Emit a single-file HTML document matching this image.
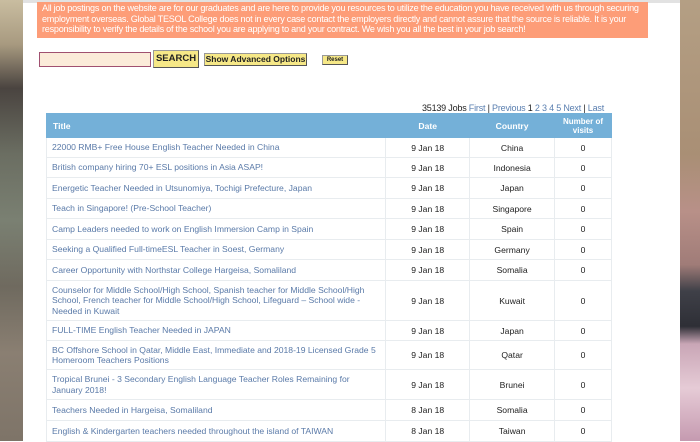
<!DOCTYPE html>
<html><head><meta charset="utf-8"><style>
*{margin:0;padding:0;box-sizing:border-box}
body{width:700px;height:441px;overflow:hidden;position:relative;font-family:"Liberation Sans",Arial,sans-serif;background:#fff}
#lb{position:absolute;left:0;top:0;width:23px;height:441px;background:linear-gradient(180deg,#c9bda0 0%,#a89a80 10%,#4a4440 20%,#6b6e62 35%,#7a8072 50%,#6f6a5f 65%,#8a7f72 80%,#7e7468 100%)}
#rb{position:absolute;left:680px;top:0;width:20px;height:441px;background:linear-gradient(180deg,#b49f84 0%,#a98f75 35%,#b89088 48%,#a07c78 60%,#3f4048 66%,#2e2f36 74%,#c9a6b6 78%,#e6cbd6 88%,#c59ab0 100%)}
#top{position:absolute;left:23px;top:0;width:657px;height:3px;background:#e2e2e2}
#banner{position:absolute;left:37px;top:2px;width:611px;height:36px;background:#fd9d78;color:#fff;font-size:9.1px;line-height:10.5px;padding:1px 5px;letter-spacing:-0.25px}
#inp{position:absolute;left:39px;top:52px;width:112px;height:15px;background:#fbebd9;border:1px solid #a05070}
.btn{position:absolute;background:#f6e887;border:1px solid #999;border-right-color:#555;border-bottom-color:#555;font-weight:bold;color:#222;text-align:center}
#pg{position:absolute;left:300px;top:103px;width:304px;text-align:right;font-size:9px;color:#222;letter-spacing:-0.2px}
#pg a{color:#5a7fb0;text-decoration:none}
table{position:absolute;left:46px;top:113px;width:566px;border-collapse:collapse;font-size:8.6px}
th{background:#74b0d8;color:#fff;font-weight:bold;height:24px;border:1px solid #74b0d8}
td{border:1px solid #e8ecef;color:#222;text-align:center;padding:0 4px}
td.t{text-align:left;color:#5a7aa8;padding:1px 5px;line-height:10.5px}
</style></head><body>
<div id="lb"></div><div id="rb"></div><div id="top"></div>
<div id="banner">All job postings on the website are for our graduates and are here to provide you resources to utilize the education you have received with us through securing employment overseas. Global TESOL College does not in every case contact the employers directly and cannot assure that the source is reliable. It is your responsibility to verify the details of the school you are applying to and your contract. We wish you all the best in your job search!</div>
<div id="inp"></div>
<div class="btn" style="left:153px;top:50px;width:46px;height:18px;font-size:9.5px;line-height:16px">SEARCH</div>
<div class="btn" style="left:204px;top:53px;width:103px;height:13px;font-size:8.5px;line-height:11px">Show Advanced Options</div>
<div class="btn" style="left:322px;top:55px;width:26px;height:10px;font-size:6px;line-height:8px">Reset</div>
<div id="pg">35139 Jobs <a>First</a> | <a>Previous</a> 1 <a>2 3 4 5 Next</a> | <a>Last</a></div>
<table>
<tr><th style="width:340px;text-align:left;padding-left:6px">Title</th><th style="width:84px">Date</th><th style="width:85px">Country</th><th style="width:57px;font-size:8px;line-height:9px">Number of visits</th></tr>
<tr style="height:20px"><td class="t">22000 RMB+ Free House English Teacher Needed in China</td><td>9 Jan 18</td><td>China</td><td>0</td></tr>
<tr style="height:20px"><td class="t">British company hiring 70+ ESL positions in Asia ASAP!</td><td>9 Jan 18</td><td>Indonesia</td><td>0</td></tr>
<tr style="height:21px"><td class="t">Energetic Teacher Needed in Utsunomiya, Tochigi Prefecture, Japan</td><td>9 Jan 18</td><td>Japan</td><td>0</td></tr>
<tr style="height:20px"><td class="t">Teach in Singapore! (Pre-School Teacher)</td><td>9 Jan 18</td><td>Singapore</td><td>0</td></tr>
<tr style="height:21px"><td class="t">Camp Leaders needed to work on English Immersion Camp in Spain</td><td>9 Jan 18</td><td>Spain</td><td>0</td></tr>
<tr style="height:20px"><td class="t">Seeking a Qualified Full-timeESL Teacher in Soest, Germany</td><td>9 Jan 18</td><td>Germany</td><td>0</td></tr>
<tr style="height:21px"><td class="t">Career Opportunity with Northstar College Hargeisa, Somaliland</td><td>9 Jan 18</td><td>Somalia</td><td>0</td></tr>
<tr style="height:40px"><td class="t">Counselor for Middle School/High School, Spanish teacher for Middle School/High School, French teacher for Middle School/High School, Lifeguard – School wide - Needed in Kuwait</td><td>9 Jan 18</td><td>Kuwait</td><td>0</td></tr>
<tr style="height:20px"><td class="t">FULL-TIME English Teacher Needed in JAPAN</td><td>9 Jan 18</td><td>Japan</td><td>0</td></tr>
<tr style="height:29px"><td class="t">BC Offshore School in Qatar, Middle East, Immediate and 2018-19 Licensed Grade 5 Homeroom Teachers Positions</td><td>9 Jan 18</td><td>Qatar</td><td>0</td></tr>
<tr style="height:30px"><td class="t">Tropical Brunei - 3 Secondary English Language Teacher Roles Remaining for January 2018!</td><td>9 Jan 18</td><td>Brunei</td><td>0</td></tr>
<tr style="height:21px"><td class="t">Teachers Needed in Hargeisa, Somaliland</td><td>8 Jan 18</td><td>Somalia</td><td>0</td></tr>
<tr style="height:21px"><td class="t">English &amp; Kindergarten teachers needed throughout the island of TAIWAN</td><td>8 Jan 18</td><td>Taiwan</td><td>0</td></tr>
</table>
</body></html>
